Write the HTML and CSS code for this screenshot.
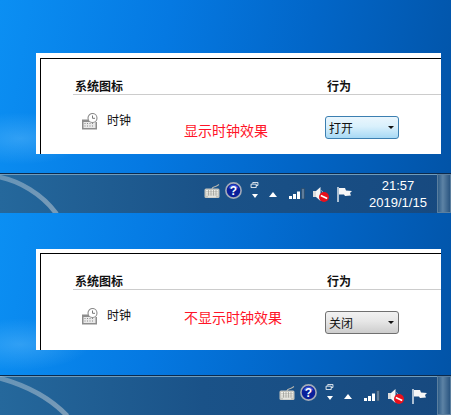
FILE: index.html
```html
<!DOCTYPE html>
<html lang="zh-CN">
<head>
  <meta charset="UTF-8">
  <meta name="viewport" content="width=device-width, initial-scale=1.0">
  <title>显示时钟效果</title>
  <link rel="stylesheet" href="styles.css">
</head>
<body>

<svg class="sprite" width="0" height="0">
  <defs>
    <linearGradient id="swoosh-fade" x1="0" y1="0" x2="1" y2="1">
      <stop offset="0" stop-color="#a9c0d2" stop-opacity=".5"/>
      <stop offset="1" stop-color="#b4c2ce" stop-opacity=".6"/>
    </linearGradient>
  </defs>
  <symbol id="i-clock" viewBox="0 0 17 17">
    <path d="M1 6.500h9.500v2.500h5.500v7.500H1z" fill="#8d8d8d"/>
    <path d="M2.500 9h12v6h-12z" fill="#e9e9e9"/>
    <path d="M3.500 10h1v1h-1zM6 10h1v1H6zM8.500 10h1v1h-1zM11 10h1v1h-1zM3.500 12.500h1v1h-1zM6 12.500h1v1H6zM8.500 12.500h1v1h-1zM11 12.500h1v1h-1z" fill="#8a8a8a"/>
    <circle cx="11.500" cy="5" r="4.500" fill="#fff" stroke="#8a8a8a" stroke-width="1.100"/>
    <path d="M11.500 2.500V5.300H14" fill="none" stroke="#777" stroke-width="1"/>
  </symbol>
  <symbol id="i-keyboard" viewBox="0 0 16 14">
    <path d="M8 5c0-2 2-2 3.500-2.500S14 1 15 .5" fill="none" stroke="#b4b4ae" stroke-width="1.100"/>
    <rect x=".5" y="4.500" width="15" height="9.500" rx="1.500" fill="#c6c6bf"/>
    <path d="M2 6h12v1.200H2zM2 8.200h12v1.200H2zM2 10.400h12v1.200H2zM4 12.300h8v.9H4z" fill="#f0f0ea"/>
    <path d="M4.500 6v5.600M7 6v5.600M9.500 6v5.600M12 6v5.600" stroke="#96968f" stroke-width=".7"/>
  </symbol>
  <symbol id="i-windows" viewBox="0 0 9 7">
    <path d="M2.500 2V.5h6v3.500h-2M.5 2.500h6v4h-6z" fill="none" stroke="#fff" stroke-width="1"/>
  </symbol>
  <symbol id="i-signal" viewBox="0 0 16 11">
    <path d="M0 8h3v3H0zM4 6h3v5H4zM8 3.500h3V11H8z" fill="#fff"/>
    <path d="M12.500 .5h3V11h-3z" fill="#5f7c9a" stroke="#25435f" stroke-width=".6"/>
  </symbol>
  <symbol id="i-mute" viewBox="0 0 16 15">
    <path d="M0 4h3v6H0z" fill="#dcdcdc"/>
    <path d="M3 4L7.500 0v14L3 10z" fill="#f6f6f6"/>
    <path d="M8.500 3.500c1 1 1.500 2 1.500 3" fill="none" stroke="#b9c6d4" stroke-width="1"/>
    <circle cx="11" cy="10" r="5" fill="#e8101c"/>
    <path d="M7.800 8.500l6.400 3" stroke="#fff" stroke-width="1.800"/>
  </symbol>
  <symbol id="i-flag" viewBox="0 0 15 15">
    <path d="M1 0v15" stroke="#fff" stroke-width="1.300"/>
    <path d="M2 1h6l1 2.500 6 .5-2 2 1 2.500-6 .5-1-1.500H2z" fill="#f7f7f7"/>
  </symbol>
</svg>

<div class="shot shot-on">
  <div class="panel">
    <div class="panel-inner">
      <div class="heads">
        <span class="head-name">系统图标</span>
        <span>行为</span>
      </div>
      <div class="row">
        <div class="item">
          <svg class="item-icon"><use href="#i-clock"/></svg>
          <span>时钟</span>
        </div>
        <div class="note">显示时钟效果</div>
        <div class="dropdown dropdown-hot">
          <span>打开</span>
          <i class="caret"></i>
        </div>
      </div>
    </div>
  </div>
  <div class="taskbar">
    <svg class="swoosh" viewBox="0 0 80 40"><path d="M-2 3C18 7 42 20 57 41" fill="none" stroke="url(#swoosh-fade)" stroke-width="5"/></svg>
    <div class="tray">
      <svg class="t-keyboard"><use href="#i-keyboard"/></svg>
      <svg class="t-help" viewBox="0 0 17 17">
        <circle cx="8.500" cy="8.500" r="7.600" fill="#0a1f9a" stroke="#a4abb8" stroke-width="1.600"/>
        <path d="M3.500 6.500c1-3 3-4 5-4s4 1 5 4c-3-1-7-1-10 0z" fill="#3a56d8"/>
        <text x="8.500" y="12.800" text-anchor="middle" class="help-mark">?</text>
      </svg>
      <div class="t-pair">
        <svg class="t-windows"><use href="#i-windows"/></svg>
        <i class="arrow-down"></i>
      </div>
      <i class="arrow-up"></i>
      <svg class="t-signal"><use href="#i-signal"/></svg>
      <svg class="t-mute"><use href="#i-mute"/></svg>
      <svg class="t-flag"><use href="#i-flag"/></svg>
      <div class="clock">
        <div>21:57</div>
        <div>2019/1/15</div>
      </div>
    </div>
    <div class="show-desktop"></div>
  </div>
</div>

<div class="shot shot-off">
  <div class="panel">
    <div class="panel-inner">
      <div class="heads">
        <span class="head-name">系统图标</span>
        <span>行为</span>
      </div>
      <div class="row">
        <div class="item">
          <svg class="item-icon"><use href="#i-clock"/></svg>
          <span>时钟</span>
        </div>
        <div class="note">不显示时钟效果</div>
        <div class="dropdown">
          <span>关闭</span>
          <i class="caret"></i>
        </div>
      </div>
    </div>
  </div>
  <div class="taskbar">
    <svg class="swoosh" viewBox="0 0 80 40"><path d="M-2 2C20 8 48 20 68 41" fill="none" stroke="url(#swoosh-fade)" stroke-width="5"/></svg>
    <div class="tray">
      <svg class="t-keyboard"><use href="#i-keyboard"/></svg>
      <svg class="t-help" viewBox="0 0 17 17">
        <circle cx="8.500" cy="8.500" r="7.600" fill="#0a1f9a" stroke="#a4abb8" stroke-width="1.600"/>
        <path d="M3.500 6.500c1-3 3-4 5-4s4 1 5 4c-3-1-7-1-10 0z" fill="#3a56d8"/>
        <text x="8.500" y="12.800" text-anchor="middle" class="help-mark">?</text>
      </svg>
      <div class="t-pair">
        <svg class="t-windows"><use href="#i-windows"/></svg>
        <i class="arrow-down"></i>
      </div>
      <i class="arrow-up"></i>
      <svg class="t-signal"><use href="#i-signal"/></svg>
      <svg class="t-mute"><use href="#i-mute"/></svg>
      <svg class="t-flag"><use href="#i-flag"/></svg>
    </div>
    <div class="show-desktop"></div>
  </div>
</div>

</body>
</html>
```

FILE: styles.css
```css
body {
  margin: 0;
  width: 451px;
  height: 415px;
  overflow: hidden;
  font-family: "Noto Sans CJK SC", "Liberation Sans", sans-serif;
  font-size: 12px;
  color: #111;
}
.sprite {
  position: absolute;
}
.help-mark {
  font-family: "Liberation Sans", sans-serif;
  font-size: 12px;
  font-weight: bold;
  fill: #fff;
}

/* one screenshot: wallpaper, cut-out of the settings window, taskbar */
.shot {
  display: flex;
  flex-direction: column;
  box-sizing: border-box;
  background:
    radial-gradient(ellipse 70px 26px at 20px 65%, rgba(120, 200, 255, 0.35), rgba(120, 200, 255, 0)),
    linear-gradient(100deg, #0b8ff3 0%, #0579e2 35%, #0266c8 65%, #0253a6 100%);
}
.shot-on {
  height: 213px;
  padding-top: 53px;
}
.shot-off {
  height: 202px;
  padding-top: 36px;
}
.panel {
  width: 405px;
  height: 101px;
  margin-left: 36px;
  padding: 5px 0 0 4px;
  box-sizing: border-box;
  background: #fff;
  display: flex;
}
.shot-on .panel {
  margin-bottom: 19px;
}
.shot-off .panel {
  margin-bottom: 25px;
  padding-top: 4px;
}
.panel-inner {
  flex: 1;
  border-top: 1px solid #000;
  border-left: 1px solid #000;
  padding-left: 32px;
}
.heads {
  height: 36px;
  box-sizing: border-box;
  border-bottom: 1px solid #ccc;
  display: flex;
  align-items: flex-end;
  padding-left: 2px;
  line-height: 16px;
  font-weight: bold;
}
.head-name {
  width: 252px;
}
.row {
  display: flex;
  align-items: flex-start;
  padding: 18px 0 0 8px;
}
.item {
  width: 103px;
  display: flex;
  gap: 9px;
  line-height: 14px;
}
.item-icon {
  width: 17px;
  height: 17px;
}
.note {
  width: 141px;
  color: #ff1428;
  font-size: 14px;
  line-height: 14px;
  margin-top: 10px;
}
.shot-off .note {
  margin-top: 2px;
}
.dropdown {
  width: 74px;
  height: 23px;
  margin-top: 3px;
  box-sizing: border-box;
  border: 1px solid #707070;
  border-radius: 3px;
  background: linear-gradient(#f2f2f2 0%, #e6e6e6 45%, #cdcdcd 100%);
  display: flex;
  align-items: center;
  justify-content: space-between;
  padding: 0 4px 0 3px;
}
.dropdown-hot {
  border-color: #3c7fb1;
  background: linear-gradient(#eaf6fd 0%, #d9f0fc 45%, #a7d9f5 100%);
}
.caret {
  width: 0;
  height: 0;
  border-left: 3.500px solid transparent;
  border-right: 3.500px solid transparent;
  border-top: 3.500px solid #111;
}

/* taskbar */
.taskbar {
  position: relative;
  height: 40px;
  box-sizing: border-box;
  border-top: 1px solid #0c2a4c;
  box-shadow: inset 0 1px 0 #6f9cbc;
  background: linear-gradient(90deg, #25689c 0%, #1a5288 45%, #17497f 100%);
  display: flex;
  justify-content: flex-end;
}
.swoosh {
  position: absolute;
  left: 0;
  top: 0;
  width: 80px;
  height: 39px;
}
.tray {
  display: flex;
  align-items: flex-start;
  padding-right: 9px;
}
.shot-off .tray {
  padding-right: 10px;
}
.t-keyboard {
  width: 16px;
  height: 14px;
  margin-top: 10px;
}
.t-help {
  width: 17px;
  height: 17px;
  margin-left: 5px;
  margin-top: 8px;
}
.t-pair {
  display: flex;
  flex-direction: column;
  align-items: center;
  gap: 6px;
  margin-left: 8px;
  margin-top: 8px;
}
.t-windows {
  width: 9px;
  height: 6px;
}
.arrow-down {
  width: 0;
  height: 0;
  border-left: 3px solid transparent;
  border-right: 3px solid transparent;
  border-top: 4px solid #fff;
}
.arrow-up {
  width: 0;
  height: 0;
  margin-left: 10px;
  margin-top: 18px;
  border-left: 4.500px solid transparent;
  border-right: 4.500px solid transparent;
  border-bottom: 5px solid #fff;
}
.t-signal {
  width: 16px;
  height: 11px;
  margin-left: 12px;
  margin-top: 14px;
}
.t-mute {
  width: 16px;
  height: 15px;
  margin-left: 8px;
  margin-top: 13px;
}
.t-flag {
  width: 15px;
  height: 15px;
  margin-left: 8px;
  margin-top: 13px;
}
.clock {
  width: 60px;
  margin-left: 16px;
  margin-top: 3px;
  color: #fff;
  font-family: "Liberation Sans", sans-serif;
  font-size: 13px;
  line-height: 17px;
  text-align: center;
}
.show-desktop {
  width: 14px;
  box-sizing: border-box;
  border: 1px solid #5b7f9f;
  background: linear-gradient(90deg, #2f5d88, #5d83a5 40%, #2a5580);
}
```
